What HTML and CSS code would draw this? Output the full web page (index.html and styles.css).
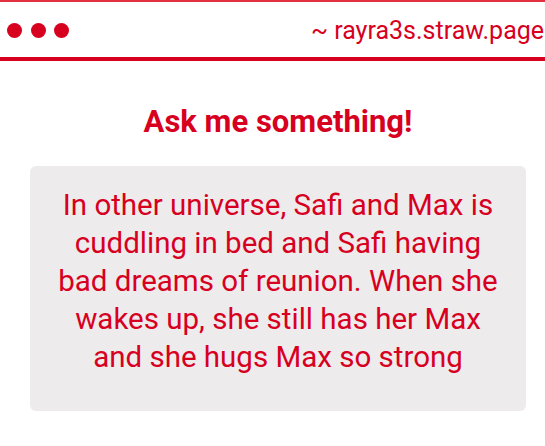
FILE: index.html
```
<!DOCTYPE html>
<html>
<head>
<meta charset="utf-8">
<link rel="stylesheet" href="styles.css">
</head>
<body>
<div class="bar">
  <div class="dots"><span class="dot"></span><span class="dot"></span><span class="dot"></span></div>
  <div class="url">~ rayra3s.straw.page</div>
</div>
<main class="content">
  <h1 class="title">Ask me something!</h1>
  <div class="card">
    <p class="msg">In other universe, Safi and Max is cuddling in bed and Safi having bad dreams of reunion. When she wakes up, she still has her Max and she hugs Max so strong</p>
  </div>
</main>
</body>
</html>
```
FILE: styles.css
```
html, body {
  margin: 0;
  padding: 0;
  background: #ffffff;
  overflow: hidden;
}
body {
  font-family: Roboto, "Liberation Sans", sans-serif;
  color: #d7001f;
  width: 545px;
  height: 446px;
}
.bar {
  height: 55px;
  border-top: 2px solid #e2323f;
  border-bottom: 4px solid #d7001f;
  display: flex;
  align-items: center;
  padding-left: 7px;
  white-space: nowrap;
  overflow: hidden;
}
.dots {
  display: flex;
  gap: 8.5px;
  margin-top: 1px;
  flex-shrink: 0;
}
.dot {
  width: 15px;
  height: 15px;
  border-radius: 50%;
  background: #d7001f;
  display: block;
}
.url {
  font-size: 25px;
  margin-left: 242px;
  margin-top: 1px;
  flex-shrink: 0;
}
.content {
  padding: 0 19px 0 30px;
}
.title {
  margin: 43px 0 0 0;
  font-size: 31px;
  font-weight: 700;
  text-align: center;
  line-height: 36px;
}
.card {
  margin-top: 26px;
  background: #eeebed;
  border-radius: 6px;
  padding: 20px 22px 35px;
}
.msg {
  margin: 0;
  font-size: 29.5px;
  line-height: 38px;
  text-align: center;
}
```
